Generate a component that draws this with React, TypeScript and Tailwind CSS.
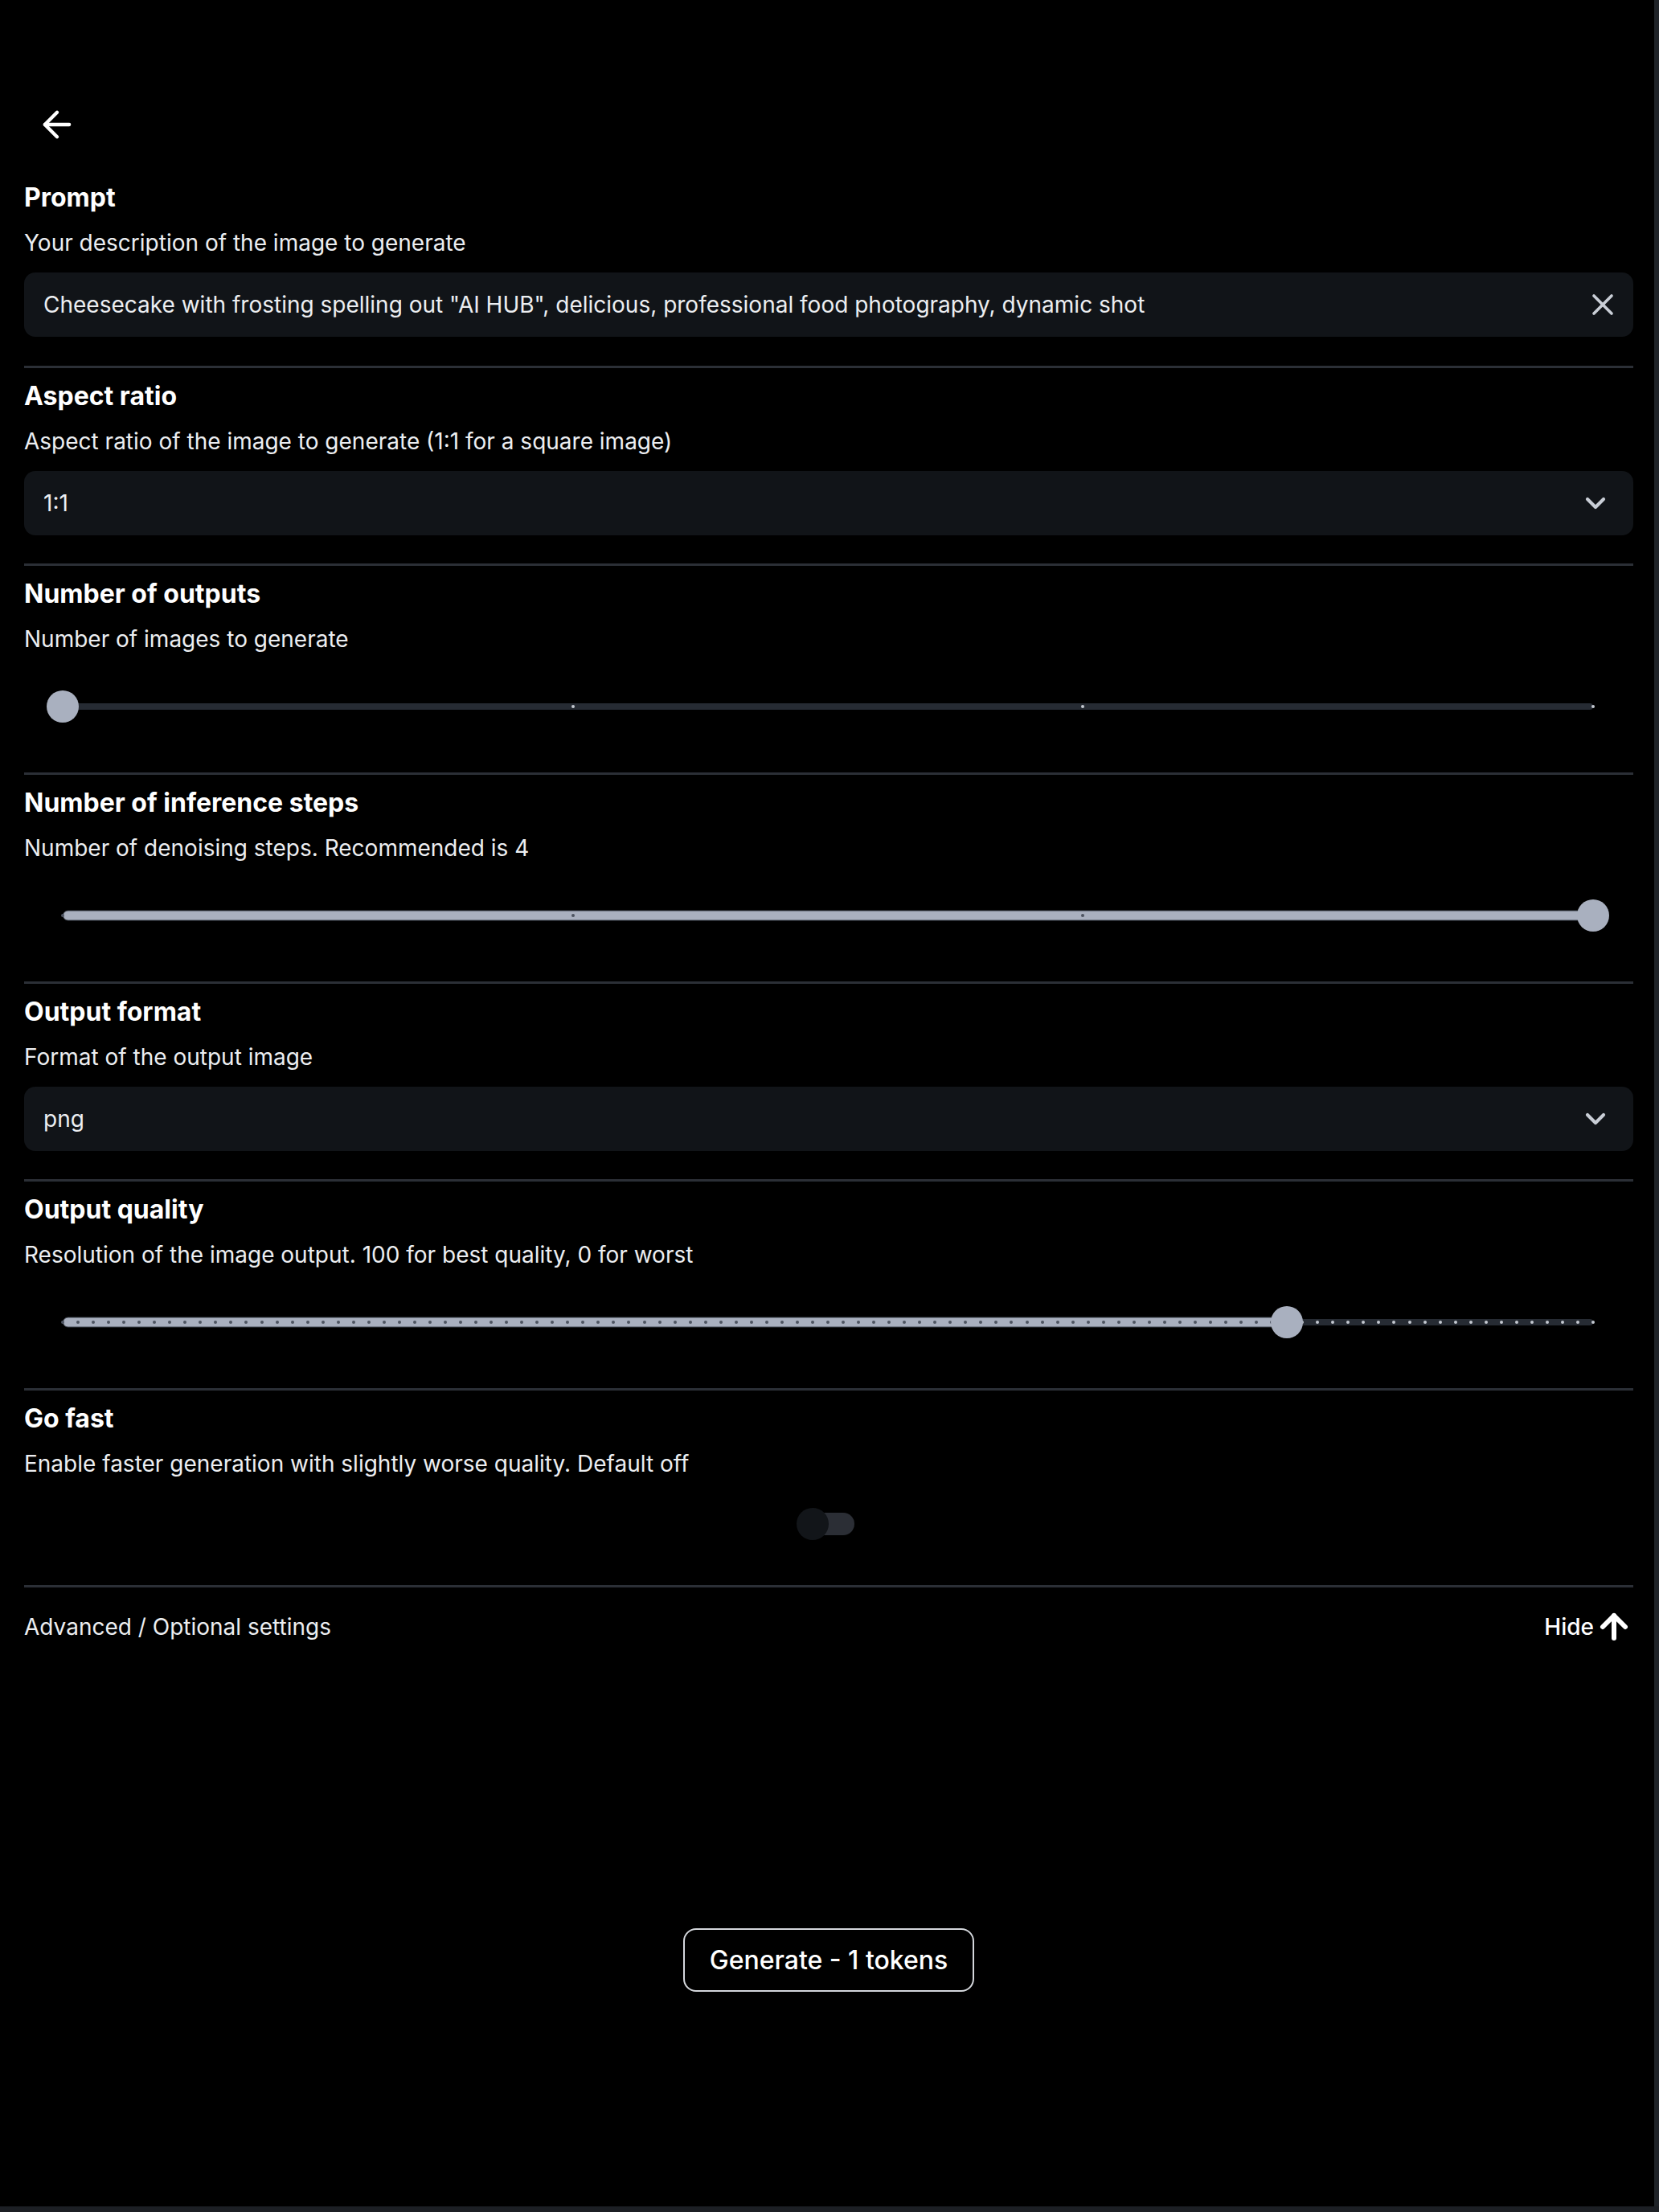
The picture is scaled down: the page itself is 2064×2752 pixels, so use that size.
import { ArrowLeft, ArrowUp, ChevronDown, X } from "lucide-react";

const font = "font-['Inter','Noto_Sans',sans-serif]";

function Slider({ value, min, max }: { value: number; min: number; max: number }) {
  const steps = max - min;
  const pct = ((value - min) / steps) * 100;
  const ticks = Array.from({ length: steps + 1 }, (_, i) => i);

  return (
    <div className="relative ml-[48px] mr-[50px] h-[40px]">
      <div className="absolute left-0 right-0 top-1/2 h-[8px] -translate-y-1/2 rounded-full bg-[#262b33]" />
      {pct > 0 && (
        <div
          className="absolute left-0 top-1/2 h-[13px] -translate-y-1/2 rounded-full border border-[#3b414b] bg-[#a9b0bf]"
          style={{ width: `${pct}%` }}
        />
      )}
      {ticks.map((i) => {
        const at = (i / steps) * 100;
        return (
          <span
            key={i}
            className={`absolute top-1/2 h-[4px] w-[4px] -translate-x-1/2 -translate-y-1/2 rounded-full ${
              at <= pct ? "bg-[#4d5461]" : "bg-[#c3c8d0]"
            }`}
            style={{ left: `${at}%` }}
          />
        );
      })}
      <div
        className="absolute top-0 h-[40px] w-[40px] -translate-x-1/2 rounded-full bg-[#a9b0bf]"
        style={{ left: `${pct}%` }}
      />
    </div>
  );
}

function Field({
  label,
  desc,
  children,
  pb = "pb-[35px]",
  gap = "mt-[19px]",
}: {
  label: string;
  desc: string;
  children: React.ReactNode;
  pb?: string;
  gap?: string;
}) {
  return (
    <section className={`border-b-[3px] border-[#2b2f36] pt-[15px] ${pb}`}>
      <h3 className="text-[32px] font-bold leading-[40px] text-white">{label}</h3>
      <p className="mt-[18px] text-[28px] leading-[36px] text-[#eceef1]">{desc}</p>
      <div className={gap}>{children}</div>
    </section>
  );
}

function Select({ value }: { value: string }) {
  return (
    <div className="flex h-[80px] items-center justify-between rounded-[14px] bg-[#111418] pl-[24px] pr-[27px]">
      <span className="text-[28px] text-[#eceef1]">{value}</span>
      <ChevronDown size={40} strokeWidth={2.5} className="text-[#c9ced6]" />
    </div>
  );
}

export default function App() {
  return (
    <div className={`flex h-[2752px] w-[2064px] flex-col bg-black ${font}`}>
      <div className="flex flex-1">
        <main className="flex w-[2058px] flex-col pl-[30px] pr-[26px]">
          {/* Back */}
          <div className="pt-[129px]">
            <ArrowLeft size={52} strokeWidth={2} className="ml-[15px] text-white" />
          </div>

          {/* Prompt */}
          <section className="mt-[45px] border-b-[3px] border-[#2b2f36] pb-[36px]">
            <h3 className="text-[32px] font-bold leading-[40px] text-white">Prompt</h3>
            <p className="mt-[18px] text-[28px] leading-[36px] text-[#eceef1]">
              Your description of the image to generate
            </p>
            <div className="mt-[19px] flex h-[80px] items-center justify-between rounded-[14px] bg-[#111418] pl-[24px] pr-[16px]">
              <span className="text-[28px] text-[#eceef1]">
                Cheesecake with frosting spelling out "AI HUB", delicious, professional food photography, dynamic shot
              </span>
              <X size={44} strokeWidth={2} className="text-[#c9ced6]" />
            </div>
          </section>

          <Field label="Aspect ratio" desc="Aspect ratio of the image to generate (1:1 for a square image)">
            <Select value="1:1" />
          </Field>

          <Field label="Number of outputs" desc="Number of images to generate" gap="mt-[46px]" pb="pb-[62px]">
            <Slider value={1} min={1} max={4} />
          </Field>

          <Field
            label="Number of inference steps"
            desc="Number of denoising steps. Recommended is 4"
            gap="mt-[46px]"
            pb="pb-[62px]"
          >
            <Slider value={4} min={1} max={4} />
          </Field>

          <Field label="Output format" desc="Format of the output image">
            <Select value="png" />
          </Field>

          <Field
            label="Output quality"
            desc="Resolution of the image output. 100 for best quality, 0 for worst"
            gap="mt-[46px]"
            pb="pb-[62px]"
          >
            <Slider value={80} min={0} max={100} />
          </Field>

          <Field
            label="Go fast"
            desc="Enable faster generation with slightly worse quality. Default off"
            gap="mt-[37px]"
            pb="pb-[56px]"
          >
            <div className="flex justify-center pr-[8px]">
              <div className="relative h-[40px] w-[72px]">
                <div className="absolute right-0 top-[6px] h-[28px] w-[54px] rounded-full bg-[#2b2e35]" />
                <div className="absolute left-0 top-0 h-[40px] w-[40px] rounded-full bg-[#121519]" />
              </div>
            </div>
          </Field>

          {/* Advanced toggle */}
          <div className="mt-[31px] flex items-center justify-between">
            <span className="text-[28px] leading-[36px] text-[#eceef1]">Advanced / Optional settings</span>
            <button className="flex items-center text-[28px] font-medium leading-[36px] text-white">
              Hide
              <ArrowUp size={48} strokeWidth={3} className="-my-[6px] ml-[1px]" />
            </button>
          </div>

          {/* Generate */}
          <div className="mt-[357px] flex justify-center">
            <button className="flex h-[79px] w-[362px] items-center justify-center rounded-[16px] border-2 border-[#d4d7dc] text-[32px] font-medium text-white">
              Generate - 1 tokens
            </button>
          </div>
        </main>
        <div className="w-[6px] bg-[#1f2328]" />
      </div>
      <div className="h-[7px] bg-[#1c1f24]" />
    </div>
  );
}
